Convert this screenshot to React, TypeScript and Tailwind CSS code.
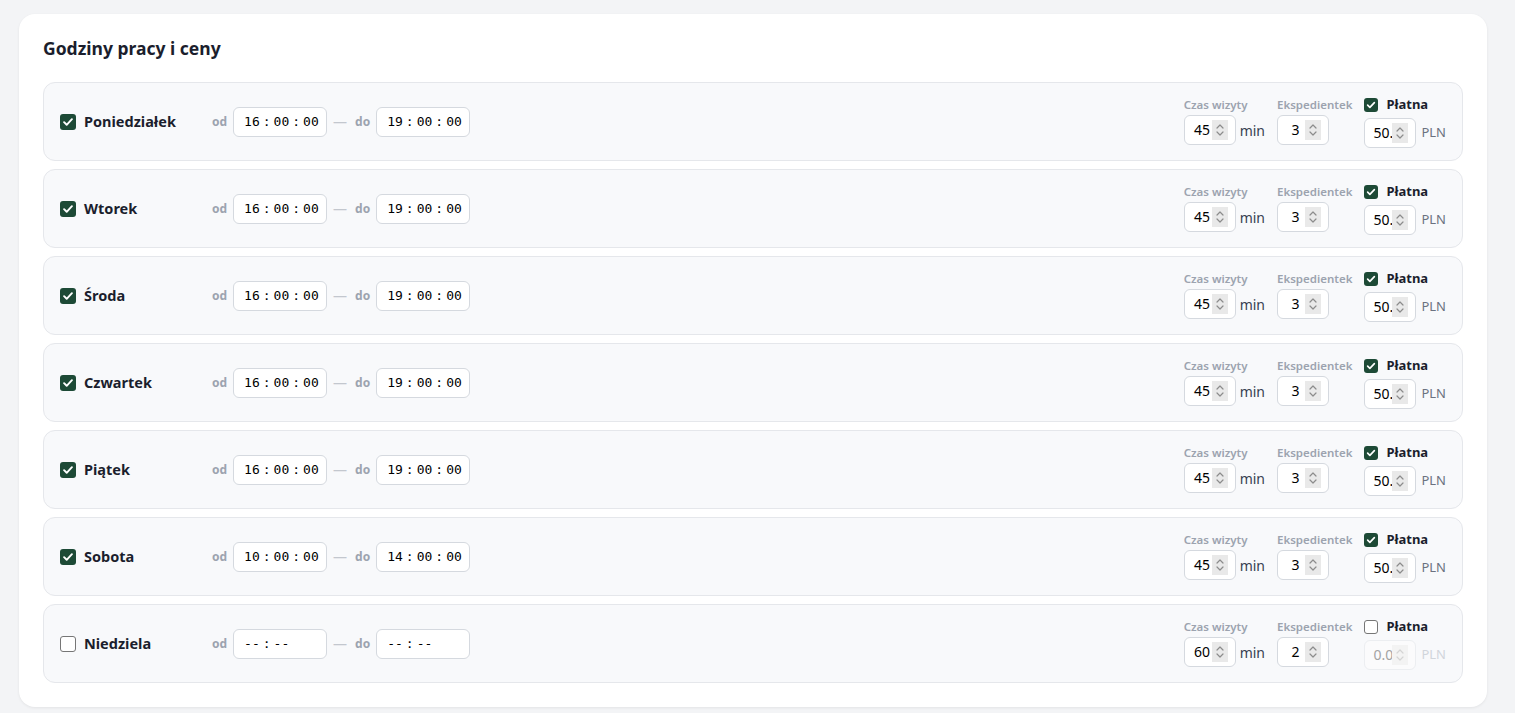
import { Fragment } from 'react'

type Day = {
  name: string
  active: boolean
  from: string[] | null
  to: string[] | null
  duration: string
  staff: string
  paid: boolean
  price: string
}

const DAYS: Day[] = [
  { name: 'Poniedziałek', active: true, from: ['16', '00', '00'], to: ['19', '00', '00'], duration: '45', staff: '3', paid: true, price: '50.00' },
  { name: 'Wtorek', active: true, from: ['16', '00', '00'], to: ['19', '00', '00'], duration: '45', staff: '3', paid: true, price: '50.00' },
  { name: 'Środa', active: true, from: ['16', '00', '00'], to: ['19', '00', '00'], duration: '45', staff: '3', paid: true, price: '50.00' },
  { name: 'Czwartek', active: true, from: ['16', '00', '00'], to: ['19', '00', '00'], duration: '45', staff: '3', paid: true, price: '50.00' },
  { name: 'Piątek', active: true, from: ['16', '00', '00'], to: ['19', '00', '00'], duration: '45', staff: '3', paid: true, price: '50.00' },
  { name: 'Sobota', active: true, from: ['10', '00', '00'], to: ['14', '00', '00'], duration: '45', staff: '3', paid: true, price: '50.00' },
  { name: 'Niedziela', active: false, from: null, to: null, duration: '60', staff: '2', paid: false, price: '0.00' },
]

function Checkbox({ checked, size = 16 }: { checked: boolean; size?: number }) {
  if (!checked) {
    return (
      <span
        className="shrink-0 rounded-[3px] border border-[#767676] bg-white"
        style={{ width: size, height: size }}
      />
    )
  }
  return (
    <span
      className="shrink-0 rounded-[3px] bg-[#1d4a36] flex items-center justify-center"
      style={{ width: size, height: size }}>
      <svg viewBox="0 0 16 16" width={size - 2} height={size - 2} fill="none">
        <path d="M3.5 8.2l3 3 6-6.4" stroke="#fff" strokeWidth="2.2" strokeLinecap="round" strokeLinejoin="round" />
      </svg>
    </span>
  )
}

function Spinner({ disabled }: { disabled?: boolean }) {
  return (
    <span className={`shrink-0 w-4 h-5 flex items-center justify-center ${disabled ? 'bg-[#f3f3f3]' : 'bg-[#e9e9e9]'}`}>
      <svg viewBox="0 0 16 20" width="16" height="20" fill="none">
        <path d="M5 8l3-3 3 3" stroke={disabled ? '#d4d4d4' : '#8c8c8c'} strokeWidth="1.2" strokeLinecap="round" strokeLinejoin="round" />
        <path d="M5 12l3 3 3-3" stroke={disabled ? '#d4d4d4' : '#8c8c8c'} strokeWidth="1.2" strokeLinecap="round" strokeLinejoin="round" />
      </svg>
    </span>
  )
}

function NumberBox({ value, disabled, clip }: { value: string; disabled?: boolean; clip?: boolean }) {
  return (
    <div
      className={`w-[52px] h-[30px] rounded-md border flex items-center pl-2 pr-[7px] ${
        disabled ? 'border-[#eceef1] bg-[#fbfbfc]' : 'border-[#d5d9df] bg-white'
      }`}>
      <span
        className={`flex-1 overflow-hidden whitespace-nowrap text-[14px] leading-5 ${clip ? 'text-left' : 'text-center'} ${
          disabled ? 'text-[#a3a3a3]' : 'text-black'
        }`}>
        {value}
      </span>
      <Spinner disabled={disabled} />
    </div>
  )
}

function TimeBox({ parts }: { parts: string[] | null }) {
  const shown = parts ?? ['--', '--']
  return (
    <div className="w-[94px] h-[30px] rounded-md border border-[#d5d9df] bg-white flex items-center pl-[10px]">
      <span className="flex items-center gap-[3px] text-[13px] text-black font-['DejaVu_Sans_Mono',monospace]">
        {shown.map((p, i) => (
          <Fragment key={i}>
            {i > 0 && <span>:</span>}
            <span>{p}</span>
          </Fragment>
        ))}
      </span>
    </div>
  )
}

function DayRow({ day }: { day: Day }) {
  return (
    <div className="flex items-center justify-between rounded-xl border border-[#e5e7eb] bg-[#f8f9fb] pl-4 pr-4 py-3">
      <div className="flex items-center">
        <Checkbox checked={day.active} />
        <span className="ml-2 w-[120px] text-[14.5px] font-bold text-[#1b1e2d]">{day.name}</span>
        <span className="ml-2 text-[12px] font-bold text-[#9ca3af]">od</span>
        <div className="ml-[6px]">
          <TimeBox parts={day.from} />
        </div>
        <span className="ml-[6px] text-[14px] text-[#c3c7ce]">—</span>
        <span className="ml-[8px] text-[12px] font-bold text-[#9ca3af]">do</span>
        <div className="ml-[6px]">
          <TimeBox parts={day.to} />
        </div>
      </div>

      <div className="flex items-center gap-3">
        <div className="flex flex-col">
          <span className="text-[11.5px] leading-[14px] font-semibold text-[#9ca3af] mb-[3px]">Czas wizyty</span>
          <div className="flex items-center gap-1">
            <NumberBox value={day.duration} />
            <span className="text-[14px] text-[#374151]">min</span>
          </div>
        </div>
        <div className="flex flex-col">
          <span className="text-[11.5px] leading-[14px] font-semibold text-[#9ca3af] mb-[3px]">Ekspedientek</span>
          <NumberBox value={day.staff} />
        </div>
        <div className="flex flex-col">
          <div className="flex items-center h-[19px] gap-2">
            <Checkbox checked={day.paid} size={14} />
            <span className="text-[13px] font-bold text-[#1b1e2d]">Płatna</span>
          </div>
          <div className="flex items-center gap-[5px] mt-1">
            <NumberBox value={day.price} disabled={!day.paid} clip />
            <span className={`text-[13px] ${day.paid ? 'text-[#6b7280]' : 'text-[#d1d5db]'}`}>PLN</span>
          </div>
        </div>
      </div>
    </div>
  )
}

export default function App() {
  return (
    <div className="min-h-screen bg-[#f3f4f6] pl-[19px] pr-[28px] pt-[14px] font-['Noto_Sans',sans-serif]">
      <div className="rounded-2xl bg-white shadow-[0_1px_3px_rgba(0,0,0,0.07)] px-6 pt-5 pb-6">
        <h2 className="text-[17.5px] leading-7 font-bold text-[#1b1e2d] mb-5">Godziny pracy i ceny</h2>
        <div className="flex flex-col gap-2">
          {DAYS.map((day) => (
            <DayRow key={day.name} day={day} />
          ))}
        </div>
      </div>
    </div>
  )
}
